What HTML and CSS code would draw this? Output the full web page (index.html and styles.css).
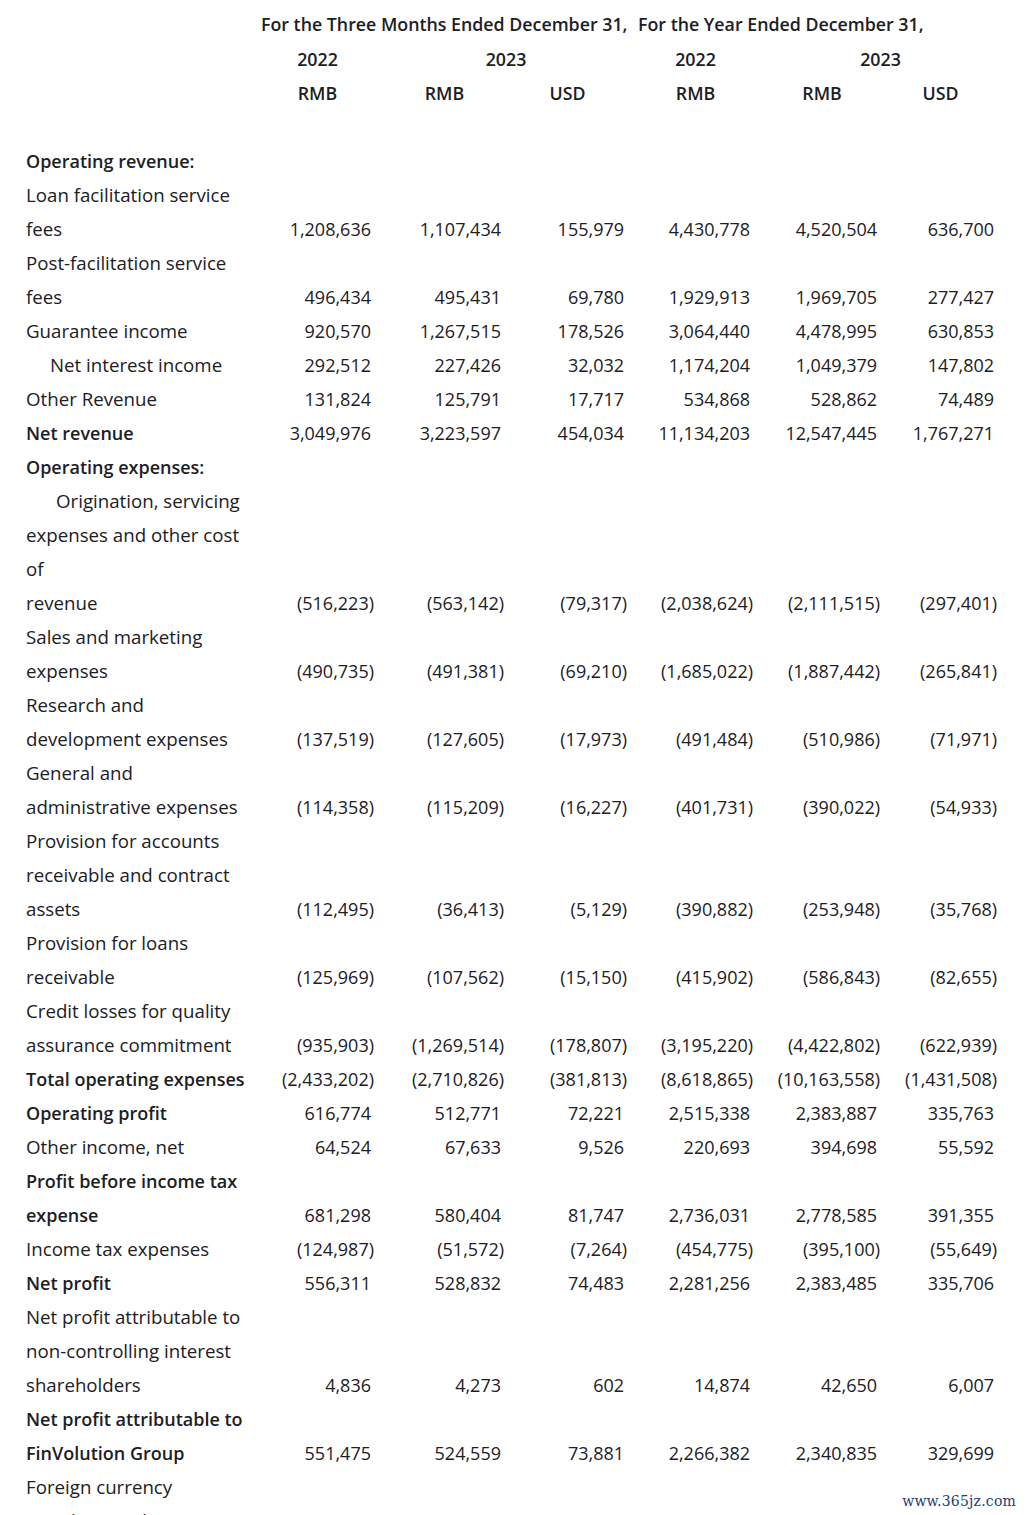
FILE: index.html
```html
<!DOCTYPE html>
<html lang="en">
<head>
<meta charset="utf-8">
<title>FinVolution Group – Income statement</title>
<link rel="stylesheet" href="styles.css">
</head>
<body>
<div class="page">
<table class="fin">
  <colgroup>
    <col class="w-label"><col class="w-c1"><col class="w-c2"><col class="w-c3"><col class="w-c4"><col class="w-c5"><col class="w-c6">
  </colgroup>
  <thead>
    <tr class="first">
      <th class="lbl"></th>
      <th colspan="3" class="period p-three">For the Three Months Ended December 31,</th>
      <th colspan="3" class="period p-year">For the Year Ended December 31,</th>
    </tr>
    <tr>
      <th class="lbl"></th>
      <th class="c1">2022</th>
      <th colspan="2" class="c2">2023</th>
      <th class="c4">2022</th>
      <th colspan="2" class="c5">2023</th>
    </tr>
    <tr>
      <th class="lbl"></th>
      <th class="c1">RMB</th><th class="c2">RMB</th><th class="c3">USD</th>
      <th class="c4">RMB</th><th class="c5">RMB</th><th class="c6">USD</th>
    </tr>
    <tr class="spacer"><th class="lbl">&nbsp;</th><th colspan="6"></th></tr>
  </thead>
  <tbody>
    <tr class="b"><td class="lbl">Operating revenue:</td><td class="c1"></td><td class="c2"></td><td class="c3"></td><td class="c4"></td><td class="c5"></td><td class="c6"></td></tr>
    <tr><td class="lbl">Loan facilitation service<br>fees</td><td class="c1">1,208,636</td><td class="c2">1,107,434</td><td class="c3">155,979</td><td class="c4">4,430,778</td><td class="c5">4,520,504</td><td class="c6">636,700</td></tr>
    <tr><td class="lbl">Post-facilitation service<br>fees</td><td class="c1">496,434</td><td class="c2">495,431</td><td class="c3">69,780</td><td class="c4">1,929,913</td><td class="c5">1,969,705</td><td class="c6">277,427</td></tr>
    <tr><td class="lbl">Guarantee income</td><td class="c1">920,570</td><td class="c2">1,267,515</td><td class="c3">178,526</td><td class="c4">3,064,440</td><td class="c5">4,478,995</td><td class="c6">630,853</td></tr>
    <tr><td class="lbl ind-s">Net interest income</td><td class="c1">292,512</td><td class="c2">227,426</td><td class="c3">32,032</td><td class="c4">1,174,204</td><td class="c5">1,049,379</td><td class="c6">147,802</td></tr>
    <tr><td class="lbl">Other Revenue</td><td class="c1">131,824</td><td class="c2">125,791</td><td class="c3">17,717</td><td class="c4">534,868</td><td class="c5">528,862</td><td class="c6">74,489</td></tr>
    <tr class="b"><td class="lbl">Net revenue</td><td class="c1">3,049,976</td><td class="c2">3,223,597</td><td class="c3">454,034</td><td class="c4">11,134,203</td><td class="c5">12,547,445</td><td class="c6">1,767,271</td></tr>
    <tr class="b"><td class="lbl">Operating expenses:</td><td class="c1"></td><td class="c2"></td><td class="c3"></td><td class="c4"></td><td class="c5"></td><td class="c6"></td></tr>
    <tr><td class="lbl ind-l">Origination, servicing<br>expenses and other cost<br>of<br>revenue</td><td class="c1 neg">(516,223)</td><td class="c2 neg">(563,142)</td><td class="c3 neg">(79,317)</td><td class="c4 neg">(2,038,624)</td><td class="c5 neg">(2,111,515)</td><td class="c6 neg">(297,401)</td></tr>
    <tr><td class="lbl">Sales and marketing<br>expenses</td><td class="c1 neg">(490,735)</td><td class="c2 neg">(491,381)</td><td class="c3 neg">(69,210)</td><td class="c4 neg">(1,685,022)</td><td class="c5 neg">(1,887,442)</td><td class="c6 neg">(265,841)</td></tr>
    <tr><td class="lbl">Research and<br>development expenses</td><td class="c1 neg">(137,519)</td><td class="c2 neg">(127,605)</td><td class="c3 neg">(17,973)</td><td class="c4 neg">(491,484)</td><td class="c5 neg">(510,986)</td><td class="c6 neg">(71,971)</td></tr>
    <tr><td class="lbl">General and<br>administrative expenses</td><td class="c1 neg">(114,358)</td><td class="c2 neg">(115,209)</td><td class="c3 neg">(16,227)</td><td class="c4 neg">(401,731)</td><td class="c5 neg">(390,022)</td><td class="c6 neg">(54,933)</td></tr>
    <tr><td class="lbl">Provision for accounts<br>receivable and contract<br>assets</td><td class="c1 neg">(112,495)</td><td class="c2 neg">(36,413)</td><td class="c3 neg">(5,129)</td><td class="c4 neg">(390,882)</td><td class="c5 neg">(253,948)</td><td class="c6 neg">(35,768)</td></tr>
    <tr><td class="lbl">Provision for loans<br>receivable</td><td class="c1 neg">(125,969)</td><td class="c2 neg">(107,562)</td><td class="c3 neg">(15,150)</td><td class="c4 neg">(415,902)</td><td class="c5 neg">(586,843)</td><td class="c6 neg">(82,655)</td></tr>
    <tr><td class="lbl">Credit losses for quality<br>assurance commitment</td><td class="c1 neg">(935,903)</td><td class="c2 neg">(1,269,514)</td><td class="c3 neg">(178,807)</td><td class="c4 neg">(3,195,220)</td><td class="c5 neg">(4,422,802)</td><td class="c6 neg">(622,939)</td></tr>
    <tr class="b"><td class="lbl">Total operating expenses</td><td class="c1 neg">(2,433,202)</td><td class="c2 neg">(2,710,826)</td><td class="c3 neg">(381,813)</td><td class="c4 neg">(8,618,865)</td><td class="c5 neg">(10,163,558)</td><td class="c6 neg">(1,431,508)</td></tr>
    <tr class="b"><td class="lbl">Operating profit</td><td class="c1">616,774</td><td class="c2">512,771</td><td class="c3">72,221</td><td class="c4">2,515,338</td><td class="c5">2,383,887</td><td class="c6">335,763</td></tr>
    <tr><td class="lbl">Other income, net</td><td class="c1">64,524</td><td class="c2">67,633</td><td class="c3">9,526</td><td class="c4">220,693</td><td class="c5">394,698</td><td class="c6">55,592</td></tr>
    <tr class="b"><td class="lbl">Profit before income tax<br>expense</td><td class="c1">681,298</td><td class="c2">580,404</td><td class="c3">81,747</td><td class="c4">2,736,031</td><td class="c5">2,778,585</td><td class="c6">391,355</td></tr>
    <tr><td class="lbl">Income tax expenses</td><td class="c1 neg">(124,987)</td><td class="c2 neg">(51,572)</td><td class="c3 neg">(7,264)</td><td class="c4 neg">(454,775)</td><td class="c5 neg">(395,100)</td><td class="c6 neg">(55,649)</td></tr>
    <tr class="b"><td class="lbl">Net profit</td><td class="c1">556,311</td><td class="c2">528,832</td><td class="c3">74,483</td><td class="c4">2,281,256</td><td class="c5">2,383,485</td><td class="c6">335,706</td></tr>
    <tr><td class="lbl">Net profit attributable to<br>non-controlling interest<br>shareholders</td><td class="c1">4,836</td><td class="c2">4,273</td><td class="c3">602</td><td class="c4">14,874</td><td class="c5">42,650</td><td class="c6">6,007</td></tr>
    <tr class="b"><td class="lbl">Net profit attributable to<br>FinVolution Group</td><td class="c1">551,475</td><td class="c2">524,559</td><td class="c3">73,881</td><td class="c4">2,266,382</td><td class="c5">2,340,835</td><td class="c6">329,699</td></tr>
    <tr><td class="lbl">Foreign currency<br>translation adjustment</td><td class="c1"></td><td class="c2"></td><td class="c3"></td><td class="c4"></td><td class="c5"></td><td class="c6"></td></tr>
  </tbody>
</table>
<div class="watermark">www.365jz.com</div>
</div>
</body>
</html>
```

FILE: styles.css
```css
html, body {
  margin: 0;
  padding: 0;
  background: #ffffff;
}

body {
  font-family: "Open Sans", "Noto Sans", "Liberation Sans", sans-serif;
  color: #1c2024;
  font-size: 18px;
}

.page {
  position: relative;
  height: 1515px;
  overflow: hidden;
  padding: 7px 0 0 26px;
  box-sizing: border-box;
}

.fin {
  table-layout: fixed;
  border-collapse: collapse;
  border-spacing: 0;
  width: 971px;
}

.w-label { width: 238px; }
.w-c1 { width: 110px; }
.w-c2 { width: 130px; }
.w-c3 { width: 123px; }
.w-c4 { width: 126px; }
.w-c5 { width: 127px; }
.w-c6 { width: 117px; }

.fin th,
.fin td {
  padding: 0 3px 0 0;
  line-height: 34px;
  vertical-align: bottom;
  white-space: nowrap;
}

.fin tr.first th {
  line-height: 35px;
}

.fin th {
  font-weight: 600;
  font-size: 17.8px;
  text-align: center;
}

.fin td {
  text-align: right;
  font-weight: 400;
}

.fin .c1 { padding-left: 0; }
.fin .c2 { padding-left: 14px; }
.fin .c3 { padding-left: 7px; }
.fin .c4 { padding-left: 14px; }
.fin .c5 { padding-left: 14px; }
.fin .c6 { padding-left: 7px; }

.fin td.neg { padding-right: 0; }

.fin .lbl {
  text-align: left;
  padding: 0;
}

.fin td.lbl {
  font-size: 18.7px;
}

.fin th.period {
  text-align: left;
  overflow: visible;
}

.fin th.p-three { padding-left: 0; text-indent: -3px; }
.fin th.p-year { padding-left: 14px; text-indent: -3px; }

.fin tr.b td.lbl {
  font-weight: 600;
  font-size: 18px;
}

.ind-s { text-indent: 24px; }
.ind-l { text-indent: 30px; }

.watermark {
  position: absolute;
  right: 17px;
  bottom: 6px;
  font-family: "DejaVu Serif", "Liberation Serif", serif;
  font-size: 14px;
  color: #1e3c78;
  letter-spacing: 0.2px;
}
```
